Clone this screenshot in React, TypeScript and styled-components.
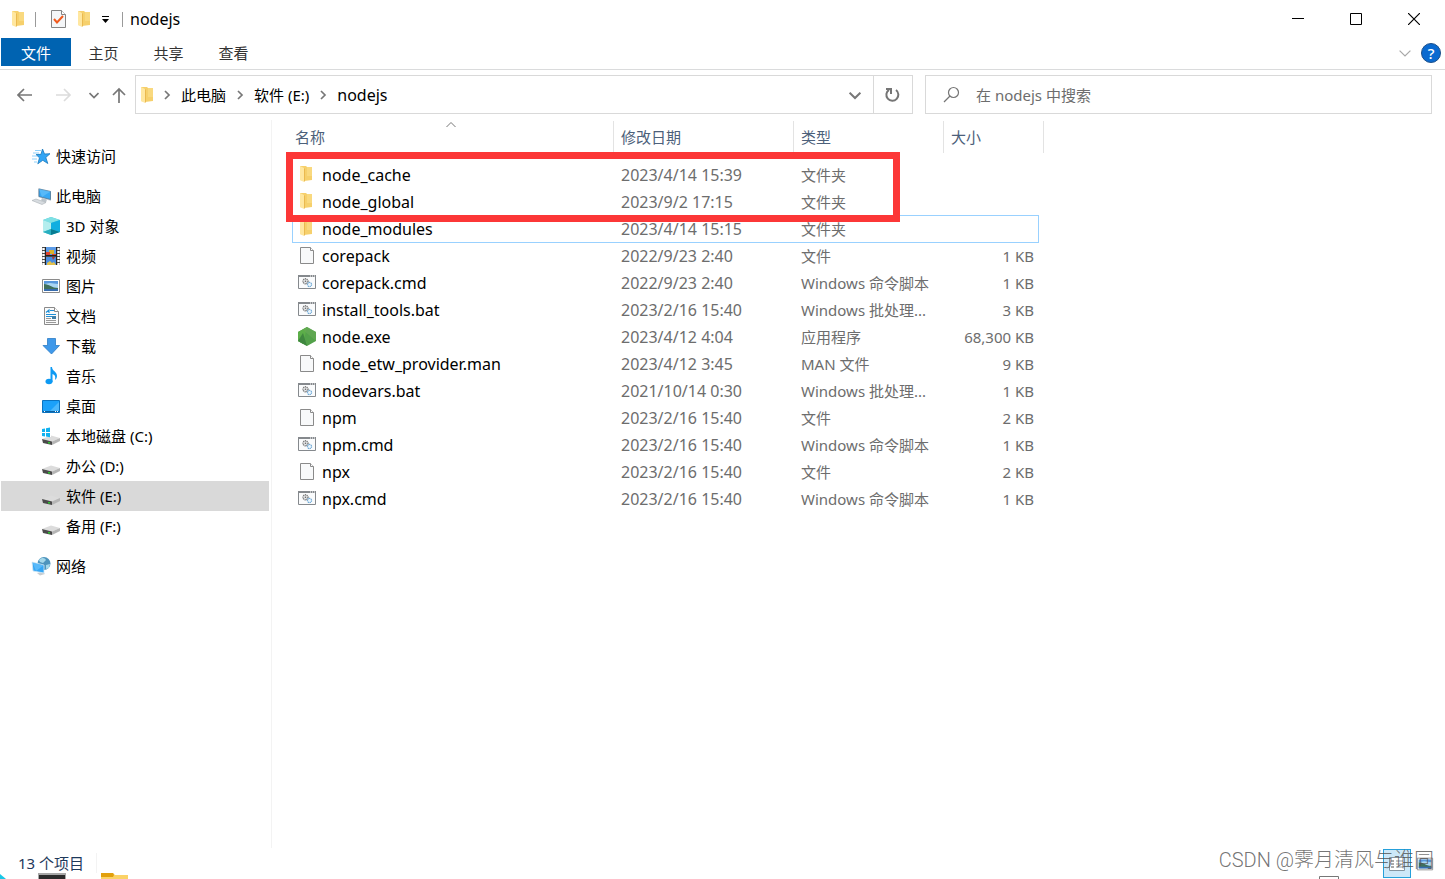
import React from "react";
import styled, { createGlobalStyle } from "styled-components";

const GlobalStyle = createGlobalStyle`
  *, *::before, *::after { box-sizing: border-box; }
  body {
    margin: 0;
    background: #fff;
    color: #000;
    font: 15px/20px "Noto Sans", "Noto Sans CJK SC", sans-serif;
  }
  button, input { font: inherit; color: inherit; }
  svg { display: block; flex: none; }
`;

const Window = styled.div`
  min-height: 100vh;
  display: flex;
  flex-direction: column;
  overflow: hidden;
`;

const PlainButton = styled.button`
  display: flex;
  align-items: center;
  justify-content: center;
  padding: 0;
  border: 0;
  background: none;
`;

/* Title bar */
const TitleBar = styled.header`
  display: flex;
  align-items: center;
  height: 38px;
  padding: 0 2px 0 12px;
`;
const Separator = styled.span<{ $before: number; $after: number }>`
  width: 1px;
  height: 15px;
  margin: 0 ${(p) => p.$after}px 0 ${(p) => p.$before}px;
  background: #9a9a9a;
`;
const QuickActions = styled.div`
  display: flex;
  align-items: center;
  gap: 12px;
`;
const Title = styled.h1`
  flex: 1;
  margin: 0;
  font-size: 16px;
  font-weight: 400;
`;
const WindowButton = styled(PlainButton)`
  width: 58px;
  height: 38px;
`;

/* Ribbon */
const Ribbon = styled.nav`
  display: flex;
  height: 32px;
  padding: 0 4px 0 1px;
  border-bottom: 1px solid #dadbdc;
`;
const RibbonTab = styled(PlainButton)<{ $file?: boolean }>`
  width: ${(p) => (p.$file ? 70 : 65)}px;
  height: 28px;
  padding-top: 1px;
  background: ${(p) => (p.$file ? "#0063b1" : "none")};
  color: ${(p) => (p.$file ? "#fff" : "#333")};
`;
const RibbonTools = styled.div`
  display: flex;
  align-items: center;
  gap: 10px;
  height: 30px;
  margin-left: auto;
`;
const HelpButton = styled(PlainButton)`
  width: 20px;
  height: 20px;
  border: 1px solid #1b4f8a;
  border-radius: 50%;
  background: #0a6ad0;
  color: #fff;
  font-weight: 500;
`;

/* Address row */
const AddressRow = styled.div`
  display: flex;
  align-items: flex-start;
  height: 50px;
  padding: 5px 13px 0 17px;
`;
const NavButtons = styled.div`
  display: grid;
  grid-template-columns: 39px 33px 23px 23px;
  height: 39px;
  button { justify-content: flex-start; }
`;
const AddressBar = styled.div`
  display: flex;
  flex: 778 1 778px;
  min-width: 0;
  height: 39px;
  border: 1px solid #d9d9d9;
`;
const Crumbs = styled.div`
  display: flex;
  flex: 1;
  align-items: center;
  padding-left: 5px;
`;
const Crumb = styled(PlainButton)<{ $current?: boolean }>`
  font-size: ${(p) => (p.$current ? 16 : 15)}px;
  white-space: nowrap;
`;
const CrumbArrow = styled.span`
  display: flex;
  justify-content: center;
  width: 28px;
`;
const AddressTool = styled(PlainButton)<{ $divided?: boolean }>`
  width: ${(p) => (p.$divided ? 39 : 37)}px;
  border-left: ${(p) => (p.$divided ? "1px solid #d9d9d9" : "0")};
`;
const SearchBox = styled.label`
  display: flex;
  flex: 507 1 507px;
  align-items: center;
  gap: 16px;
  min-width: 0;
  height: 39px;
  margin-left: 12px;
  padding-left: 17px;
  border: 1px solid #d9d9d9;
`;
const SearchInput = styled.input`
  flex: 1;
  min-width: 0;
  padding: 0;
  border: 0;
  outline: 0;
  background: none;
  &::placeholder { color: #6d6d6d; opacity: 1; }
`;

/* Body */
const Body = styled.div`
  display: flex;
  flex: 1;
`;
const Sidebar = styled.nav`
  flex: none;
  width: 272px;
  padding: 21px 2px 0 1px;
  border-right: 1px solid #f3f3f3;
`;
const TreeGroup = styled.ul`
  margin: 0 0 10px;
  padding: 0;
  list-style: none;
`;
const TreeLink = styled.a<{ $nested?: boolean; $selected?: boolean }>`
  display: flex;
  align-items: center;
  gap: 5px;
  height: 30px;
  padding-left: ${(p) => (p.$nested ? 40 : 30)}px;
  background: ${(p) => (p.$selected ? "#d9d9d9" : "none")};
  color: #000;
  text-decoration: none;
  white-space: nowrap;
`;
const FilePane = styled.main`
  position: relative;
  flex: 1;
  min-width: 0;
  padding: 1px 0 20px 20px;
`;
const FileTable = styled.table`
  table-layout: fixed;
  width: 752px;
  border-collapse: separate;
  border-spacing: 0;
`;
const HeadCell = styled.th<{ $width: number; $first?: boolean }>`
  position: relative;
  width: ${(p) => p.$width}px;
  height: 32px;
  padding: 0 0 0 ${(p) => (p.$first ? 3 : 7)}px;
  border-right: 1px solid #e3e3e3;
  color: #4c607a;
  font-weight: 400;
  text-align: left;
`;
const SortMark = styled.span`
  position: absolute;
  top: -1px;
  left: 50%;
  margin-left: -7px;
`;
const FileBody = styled.tbody`
  &::before {
    content: "";
    display: block;
    height: 8px;
  }
`;
const FileRow = styled.tr<{ $focused?: boolean }>`
  position: relative;
  &::after {
    content: "";
    display: ${(p) => (p.$focused ? "block" : "none")};
    position: absolute;
    inset: 0 5px -1px 0;
    border: 1px solid #99d1ff;
  }
`;
const Cell = styled.td<{ $right?: boolean }>`
  height: 27px;
  padding: 0 ${(p) => (p.$right ? 10 : 0)}px 0 7px;
  color: #6d6d6d;
  text-align: ${(p) => (p.$right ? "right" : "left")};
  white-space: nowrap;
`;
const DateCell = styled(Cell)`
  font-size: 16px;
`;
const NameCell = styled(Cell)`
  padding: 0 0 0 6px;
  color: #000;
  font-size: 16px;
`;
const FileName = styled.div`
  display: flex;
  align-items: center;
  gap: 6px;
  height: 27px;
`;
const Highlight = styled.div`
  position: absolute;
  top: 32px;
  left: 14px;
  width: 614px;
  height: 70px;
  border: 7px solid #fc3737;
`;

/* Status bar */
const StatusBar = styled.footer`
  position: relative;
  display: flex;
  align-items: flex-start;
  justify-content: space-between;
  height: 31px;
  padding: 1px 11px 0 18px;
`;
const StatusText = styled.span`
  margin-top: 4px;
  padding-right: 12px;
  border-right: 1px solid #f3f3f3;
  color: #1e395b;
`;
const ViewButtons = styled.div`
  display: flex;
  gap: 5px;
`;
const ViewButton = styled(PlainButton)<{ $on?: boolean }>`
  width: ${(p) => (p.$on ? 28 : 18)}px;
  height: 29px;
  border: ${(p) => (p.$on ? "1px solid #26a0da" : "0")};
  background: ${(p) => (p.$on ? "#cce8f8" : "none")};
`;
const Peek = styled.div<{ $side: "left" | "right" }>`
  position: absolute;
  bottom: 0;
  ${(p) => (p.$side === "left" ? "left: 0;" : "right: 105px;")}
`;
const Watermark = styled.span`
  position: absolute;
  right: 11px;
  top: 0;
  color: rgba(80, 80, 80, 0.8);
  font: 300 20px/24px Roboto, "Noto Sans CJK SC", sans-serif;
  white-space: nowrap;
`;

/* Icons */
const FolderShape = () => (
  <>
    <path d="M0 1h6l1 1h5v13l-8 1-4-1z" fill="#f6d06c" />
    <path d="M7 2h5v9H7z" fill="#f9d97f" />
    <path d="M0 1l4 2v14l-4-2z" fill="#ffe7a0" />
    <path d="M4 4v13l1-1V3z" fill="#eab94f" />
  </>
);
const FolderIcon = () => (
  <svg width="12" height="18" viewBox="0 0 12 18"><FolderShape /></svg>
);
const RowFolder = () => (
  <svg width="18" height="18" viewBox="-2 1 18 18"><FolderShape /></svg>
);
const PropertiesIcon = () => (
  <svg width="15" height="18" viewBox="0 0 15 18">
    <path d="M.5.5h10l4 4v13H.5z" fill="#f4f6f8" stroke="#858585" />
    <path d="M10.5.5v4h4" fill="#fff" stroke="#858585" />
    <path d="M3 9l3 3.500L12 6" fill="none" stroke="#f05a1e" strokeWidth="2" />
  </svg>
);
const CustomizeIcon = () => (
  <svg width="7" height="8" viewBox="0 0 7 8">
    <path d="M0 1h7v1H0zM0 4h7L3.500 8z" fill="#000" />
  </svg>
);
const chevronPaths = {
  down: "M0.500 3L5 7.500 9.500 3",
  right: "M3 1l4 4-4 4",
  up: "M0.500 7L5 2.500 9.500 7",
};
const Chevron = ({ dir, size = 10, color = "#777", weight = 1.7 }: { dir: keyof typeof chevronPaths; size?: number; color?: string; weight?: number }) => (
  <svg width={size} height={size} viewBox="0 0 10 10" fill="none" stroke={color} strokeWidth={weight}>
    <path d={chevronPaths[dir]} />
  </svg>
);
const Arrow = ({ d, color = "#777" }: { d: string; color?: string }) => (
  <svg width="16" height="16" viewBox="0 0 16 16" fill="none" stroke={color} strokeWidth="1.700">
    <path d={d} />
  </svg>
);
const MinimizeIcon = () => (
  <svg width="12" height="12" viewBox="0 0 12 12"><path d="M0 5h12v1H0z" /></svg>
);
const MaximizeIcon = () => (
  <svg width="12" height="12" viewBox="0 0 12 12"><path d="M.5.5h11v11H.5z" fill="none" stroke="#000" /></svg>
);
const CloseIcon = () => (
  <svg width="12" height="12" viewBox="0 0 12 12"><path d="M0 0l12 12M12 0L0 12" fill="none" stroke="#000" strokeWidth="1.200" /></svg>
);
const RefreshIcon = () => (
  <svg width="16" height="16" viewBox="0 0 16 16" fill="none" stroke="#757575" strokeWidth="2">
    <path d="M11 3a6 6 0 1 1-7-.2" />
    <path d="M1 2h5v5" />
  </svg>
);
const SearchIcon = () => (
  <svg width="17" height="17" viewBox="0 0 17 17" fill="none" stroke="#757575" strokeWidth="1.200">
    <circle cx="10.500" cy="6.500" r="5" />
    <path d="M7 10l-6 6" />
  </svg>
);
const StarIcon = () => (
  <svg width="20" height="20" viewBox="0 0 20 20">
    <path d="M11.500 3l2 5 5.500-.3-4.200 3.800 2 6-5-3.200-5 3.500 1.700-6L5 8.600l5-.3z" fill="#31a5f5" stroke="#1878bd" strokeWidth=".8" />
    <path d="M4 4.500h6M2 7h6M1 10h5M1 13h5M3 16h3" stroke="#8ed0fa" strokeWidth="1" />
  </svg>
);
const PcIcon = () => (
  <svg width="20" height="20" viewBox="0 0 20 20">
    <path d="M7 2l13 3v10L7 11z" fill="#cfd8df" />
    <path d="M8 3l11.500 2.500v8L8 10.500z" fill="#38a8f4" stroke="#4b6f8b" strokeWidth=".7" />
    <path d="M8 3l11.500 2.500L11 11z" fill="#6cc4fb" opacity=".6" />
    <path d="M11 12l5 1.500-1 3-5-2z" fill="#bcc4ca" />
    <path d="M1 14.500l4-1.500 10 3.500-4 2z" fill="#d7dce0" stroke="#a9b0b6" strokeWidth=".6" />
  </svg>
);
const CubeIcon = () => (
  <svg width="20" height="20" viewBox="0 0 20 20">
    <path d="M2 4l8-3 9 3v12l-9 3-8-3z" fill="#46c8d6" />
    <path d="M2 4l8-3 9 3-9 3z" fill="#7fe0e4" />
    <path d="M2 4l8 3v6l-8 3z" fill="#b4eeee" />
    <path d="M10 7l9-3v12l-9-3z" fill="#11aee0" />
    <path d="M2 16l8-3v6z" fill="#29aebf" />
    <path d="M10 13l9 3-9 3z" fill="#087c92" />
  </svg>
);
const VideoIcon = () => (
  <svg width="20" height="20" viewBox="0 0 20 20">
    <path d="M1 1h18v18H1z" fill="#4b4b4b" />
    <path d="M5 1h10v8H5z" fill="#5c9be6" />
    <path d="M5 11h10v8H5z" fill="#4b8de0" />
    <path d="M2.500 2v17M17.500 2v17" stroke="#fff" strokeWidth="2.400" strokeDasharray="2 1" />
    <path d="M8 4h5v4H8z" fill="#d8b32c" />
    <path d="M5 6h4v3H5zM11 8h4v2h-4z" fill="#e0442e" />
    <path d="M11 11h3l-2 3z" fill="#a83a35" />
    <path d="M6 17l3-2 2 2 2-1 2 3H6z" fill="#e2c04c" />
    <path d="M5 9.500h10M4.500 1v18M15.500 1v18" stroke="#222" />
  </svg>
);
const PictureIcon = ({ size = 20 }: { size?: number }) => (
  <svg width={size} height={size} viewBox="0 0 20 20">
    <path d="M1.500 3.500h17v13h-17z" fill="#fff" stroke="#8b8b8b" />
    <path d="M3 5h14v10H3z" fill="#a9d5f3" />
    <path d="M3 5h14v3l-8-1-6 1z" fill="#5797dc" />
    <path d="M3 8c5 0 8 4 14 4v2H3z" fill="#3f6f5c" />
    <path d="M3 13h14v2H3z" fill="#376cae" />
  </svg>
);
const DocIcon = () => (
  <svg width="20" height="20" viewBox="0 0 20 20">
    <path d="M3.500 1.500h10l4 4v13h-14z" fill="#fafafa" stroke="#8a8a8a" />
    <path d="M13.500 1.500v4h4" fill="#fff" stroke="#8a8a8a" />
    <path d="M5 6.500l3-2.500v3M9 4.500h4M5 8.500h10M5 10.500h10" stroke="#1f8fd6" strokeWidth="1.100" fill="none" />
    <path d="M11 10h4v3h-4z" fill="#3f7fa8" />
    <path d="M5 12.500h5M5 14.500h10M5 16.500h10" stroke="#999" />
  </svg>
);
const DownloadIcon = () => (
  <svg width="20" height="20" viewBox="0 0 20 20">
    <path d="M6.500 2.500h8v7h4L10.500 18 2 9.500h4.500z" fill="#3f99ea" stroke="#2c7cc5" strokeWidth=".8" />
  </svg>
);
const MusicIcon = () => (
  <svg width="20" height="20" viewBox="0 0 20 20" fill="#0e9af3">
    <ellipse cx="8" cy="15.500" rx="3.500" ry="2.700" />
    <path d="M9.500 1H11c0 4 5 4.500 5 9 0 2-1 3-2 4 .6-3 .4-5-2.500-6v8h-2z" />
  </svg>
);
const DesktopIcon = () => (
  <svg width="20" height="20" viewBox="0 0 20 20">
    <path d="M1.500 4.500h17v12h-17z" fill="#1ba1fa" stroke="#0b73c0" />
    <path d="M9 15l9-9v9z" fill="#4cb8fc" />
    <path d="M2 15.500h16" stroke="#0c5f9e" />
    <path d="M3 15.500h1M14 15.500h1M16 15.500h1" stroke="#fff" />
  </svg>
);
const DriveIcon = ({ system }: { system?: boolean }) => (
  <svg width="20" height="20" viewBox="0 0 20 20">
    <path d="M1 13l9-3.500 9 2.500-8 3.500z" fill="#dcdcdc" />
    <path d="M1 13l10 2.500V19l-9-2z" fill="#4a4a4a" />
    <path d="M11 15.500l8-3.500v3L11 19z" fill="#b5b5b5" />
    <path d="M7 16h2v1.500H7z" fill="#2fc32f" />
    {system && (
      <>
        <path d="M1 2h9v9H1z" fill="#fff" />
        <path d="M1 3l3-.5V6H1zM5 2.300l4-.7V6H5zM1 7h3v3.500L1 10zM5 7h4v4.300l-4-.7z" fill="#12b2f0" />
      </>
    )}
  </svg>
);
const NetworkIcon = () => (
  <svg width="20" height="20" viewBox="0 0 20 20">
    <circle cx="13" cy="7.500" r="6.500" fill="#4d94bd" />
    <path d="M8 4c3-3 6-2 7 0l-3 3-3-1zM15 9l4-1-1 4-3 1z" fill="#a5d8ea" />
    <path d="M6 17l6-1 2 2-5 1.500z" fill="#c8cdd1" />
    <path d="M1 6l12 3v8L2 15z" fill="#35a6f5" stroke="#d7e8f2" strokeWidth=".8" />
    <path d="M1.500 6.500L12.500 9.500 5 15z" fill="#70c6fb" opacity=".6" />
  </svg>
);
const BlankFileIcon = () => (
  <svg width="18" height="20" viewBox="0 0 18 20">
    <path d="M2.500 1.500h10l3 3v13h-13z" fill="#f8f9fa" stroke="#8a8a8a" />
    <path d="M12.500 1.500v3h3" fill="#fff" stroke="#8a8a8a" />
  </svg>
);
const ScriptIcon = () => (
  <svg width="18" height="20" viewBox="0 0 18 20">
    <path d="M.5 2.500h17v13H.5z" fill="#fafbfc" stroke="#85898d" />
    <path d="M0 2h18v2H0z" fill="#85898d" />
    <path d="M12 3h1M14 3h1M16 3h1" stroke="#fff" />
    <circle cx="7.500" cy="8.300" r="2.500" fill="#e7e9eb" stroke="#777" strokeWidth="1.400" strokeDasharray="1.200 .6" />
    <circle cx="7.500" cy="8.300" r=".8" fill="#666" />
    <circle cx="11.500" cy="11.500" r="2.100" fill="#e9f4fc" stroke="#69a5d3" strokeWidth="1.200" strokeDasharray="1.200 .5" />
  </svg>
);
const NodeIcon = () => (
  <svg width="18" height="20" viewBox="0 0 18 20">
    <path d="M9 0l9 5v9l-9 5-9-5V5z" fill="#53a14a" />
    <path d="M9 0L0 5v9l5 3z" fill="#5cae49" />
    <path d="M0 14l5-8 4 13z" fill="#3f873f" />
    <path d="M9 0l9 5v9L5 3z" fill="#66a956" opacity=".7" />
  </svg>
);

type TreeItem = { label: string; icon: React.ReactNode; nested?: boolean; selected?: boolean };
const tree: TreeItem[][] = [
  [{ label: "快速访问", icon: <StarIcon /> }],
  [
    { label: "此电脑", icon: <PcIcon /> },
    { label: "3D 对象", icon: <CubeIcon />, nested: true },
    { label: "视频", icon: <VideoIcon />, nested: true },
    { label: "图片", icon: <PictureIcon />, nested: true },
    { label: "文档", icon: <DocIcon />, nested: true },
    { label: "下载", icon: <DownloadIcon />, nested: true },
    { label: "音乐", icon: <MusicIcon />, nested: true },
    { label: "桌面", icon: <DesktopIcon />, nested: true },
    { label: "本地磁盘 (C:)", icon: <DriveIcon system />, nested: true },
    { label: "办公 (D:)", icon: <DriveIcon />, nested: true },
    { label: "软件 (E:)", icon: <DriveIcon />, nested: true, selected: true },
    { label: "备用 (F:)", icon: <DriveIcon />, nested: true },
  ],
  [{ label: "网络", icon: <NetworkIcon /> }],
];

const fileIcons = { folder: RowFolder, blank: BlankFileIcon, script: ScriptIcon, node: NodeIcon };
type FileKind = keyof typeof fileIcons;
const files: [FileKind, string, string, string, string][] = [
  ["folder", "node_cache", "2023/4/14 15:39", "文件夹", ""],
  ["folder", "node_global", "2023/9/2 17:15", "文件夹", ""],
  ["folder", "node_modules", "2023/4/14 15:15", "文件夹", ""],
  ["blank", "corepack", "2022/9/23 2:40", "文件", "1 KB"],
  ["script", "corepack.cmd", "2022/9/23 2:40", "Windows 命令脚本", "1 KB"],
  ["script", "install_tools.bat", "2023/2/16 15:40", "Windows 批处理...", "3 KB"],
  ["node", "node.exe", "2023/4/12 4:04", "应用程序", "68,300 KB"],
  ["blank", "node_etw_provider.man", "2023/4/12 3:45", "MAN 文件", "9 KB"],
  ["script", "nodevars.bat", "2021/10/14 0:30", "Windows 批处理...", "1 KB"],
  ["blank", "npm", "2023/2/16 15:40", "文件", "2 KB"],
  ["script", "npm.cmd", "2023/2/16 15:40", "Windows 命令脚本", "1 KB"],
  ["blank", "npx", "2023/2/16 15:40", "文件", "2 KB"],
  ["script", "npx.cmd", "2023/2/16 15:40", "Windows 命令脚本", "1 KB"],
];

export default function App() {
  return (
    <Window>
      <GlobalStyle />
      <TitleBar>
        <FolderIcon />
        <Separator $before={11} $after={15} />
        <QuickActions>
          <PlainButton aria-label="属性"><PropertiesIcon /></PlainButton>
          <PlainButton aria-label="新建文件夹"><FolderIcon /></PlainButton>
          <PlainButton aria-label="自定义"><CustomizeIcon /></PlainButton>
        </QuickActions>
        <Separator $before={13} $after={7} />
        <Title>nodejs</Title>
        <WindowButton aria-label="最小化"><MinimizeIcon /></WindowButton>
        <WindowButton aria-label="最大化"><MaximizeIcon /></WindowButton>
        <WindowButton aria-label="关闭"><CloseIcon /></WindowButton>
      </TitleBar>
      <Ribbon>
        <RibbonTab $file>文件</RibbonTab>
        <RibbonTab>主页</RibbonTab>
        <RibbonTab>共享</RibbonTab>
        <RibbonTab>查看</RibbonTab>
        <RibbonTools>
          <PlainButton aria-label="展开功能区"><Chevron dir="down" size={12} color="#a8a8a8" weight={1} /></PlainButton>
          <HelpButton aria-label="帮助">?</HelpButton>
        </RibbonTools>
      </Ribbon>
      <AddressRow>
        <NavButtons>
          <PlainButton aria-label="后退"><Arrow d="M15 8H1M7 2L1 8l6 6" /></PlainButton>
          <PlainButton aria-label="前进"><Arrow d="M0 8h14M8 2l6 6-6 6" color="#dcdcdc" /></PlainButton>
          <PlainButton aria-label="最近浏览的位置"><Chevron dir="down" /></PlainButton>
          <PlainButton aria-label="上移"><Arrow d="M7 16V2M1 8l6-6 6 6" /></PlainButton>
        </NavButtons>
        <AddressBar>
          <Crumbs>
            <FolderIcon />
            <CrumbArrow><Chevron dir="right" /></CrumbArrow>
            <Crumb>此电脑</Crumb>
            <CrumbArrow><Chevron dir="right" /></CrumbArrow>
            <Crumb>软件 (E:)</Crumb>
            <CrumbArrow><Chevron dir="right" /></CrumbArrow>
            <Crumb $current>nodejs</Crumb>
          </Crumbs>
          <AddressTool aria-label="以前的位置"><Chevron dir="down" size={12} /></AddressTool>
          <AddressTool $divided aria-label="刷新"><RefreshIcon /></AddressTool>
        </AddressBar>
        <SearchBox>
          <SearchIcon />
          <SearchInput aria-label="搜索" placeholder="在 nodejs 中搜索" />
        </SearchBox>
      </AddressRow>
      <Body>
        <Sidebar>
          {tree.map((group, i) => (
            <TreeGroup key={i}>
              {group.map((item) => (
                <li key={item.label}>
                  <TreeLink href="#" $nested={item.nested} $selected={item.selected}>
                    {item.icon}
                    {item.label}
                  </TreeLink>
                </li>
              ))}
            </TreeGroup>
          ))}
        </Sidebar>
        <FilePane>
          <FileTable>
            <thead>
              <tr>
                <HeadCell $width={322} $first>
                  名称
                  <SortMark><Chevron dir="up" color="#777" weight={1} /></SortMark>
                </HeadCell>
                <HeadCell $width={180}>修改日期</HeadCell>
                <HeadCell $width={150}>类型</HeadCell>
                <HeadCell $width={100}>大小</HeadCell>
              </tr>
            </thead>
            <FileBody>
              {files.map(([kind, name, date, type, size]) => {
                const Icon = fileIcons[kind];
                return (
                  <FileRow key={name} $focused={name === "node_modules"}>
                    <NameCell><FileName><Icon /><span>{name}</span></FileName></NameCell>
                    <DateCell>{date}</DateCell>
                    <Cell>{type}</Cell>
                    <Cell $right>{size}</Cell>
                  </FileRow>
                );
              })}
            </FileBody>
          </FileTable>
          <Highlight />
        </FilePane>
      </Body>
      <StatusBar>
        <StatusText>13 个项目</StatusText>
        <ViewButtons>
          <ViewButton $on aria-label="详细信息">
            <svg width="18" height="18" viewBox="0 0 18 18">
              <path d="M1.500 2.500h15v13h-15z" fill="#fff" stroke="#8595a0" />
              <path d="M3 6h3M3 9h3M3 12h3" stroke="#555" />
              <path d="M8 6h7M8 9h7M8 12h7" stroke="#8595a0" />
            </svg>
          </ViewButton>
          <ViewButton aria-label="大图标"><PictureIcon size={18} /></ViewButton>
        </ViewButtons>
        <Peek $side="left">
          <svg width="130" height="6" viewBox="0 0 130 6">
            <path d="M0 1l6 5H0z" fill="#19c7e6" />
            <path d="M38 0h28v6H38z" fill="#a8a8a8" />
            <path d="M39 2h26v4H39z" fill="#2b2b2b" />
            <path d="M101 0h12l2 2h13v4h-27z" fill="#fbd266" />
            <path d="M101 0h12l1 2-1 2h-12z" fill="#e2a00c" />
          </svg>
        </Peek>
        <Peek $side="right">
          <svg width="22" height="3" viewBox="0 0 22 3">
            <path d="M1.500 3V.5h19V3" fill="#fff" stroke="#777" />
          </svg>
        </Peek>
        <Watermark>CSDN @霁月清风与谁同</Watermark>
      </StatusBar>
    </Window>
  );
}
